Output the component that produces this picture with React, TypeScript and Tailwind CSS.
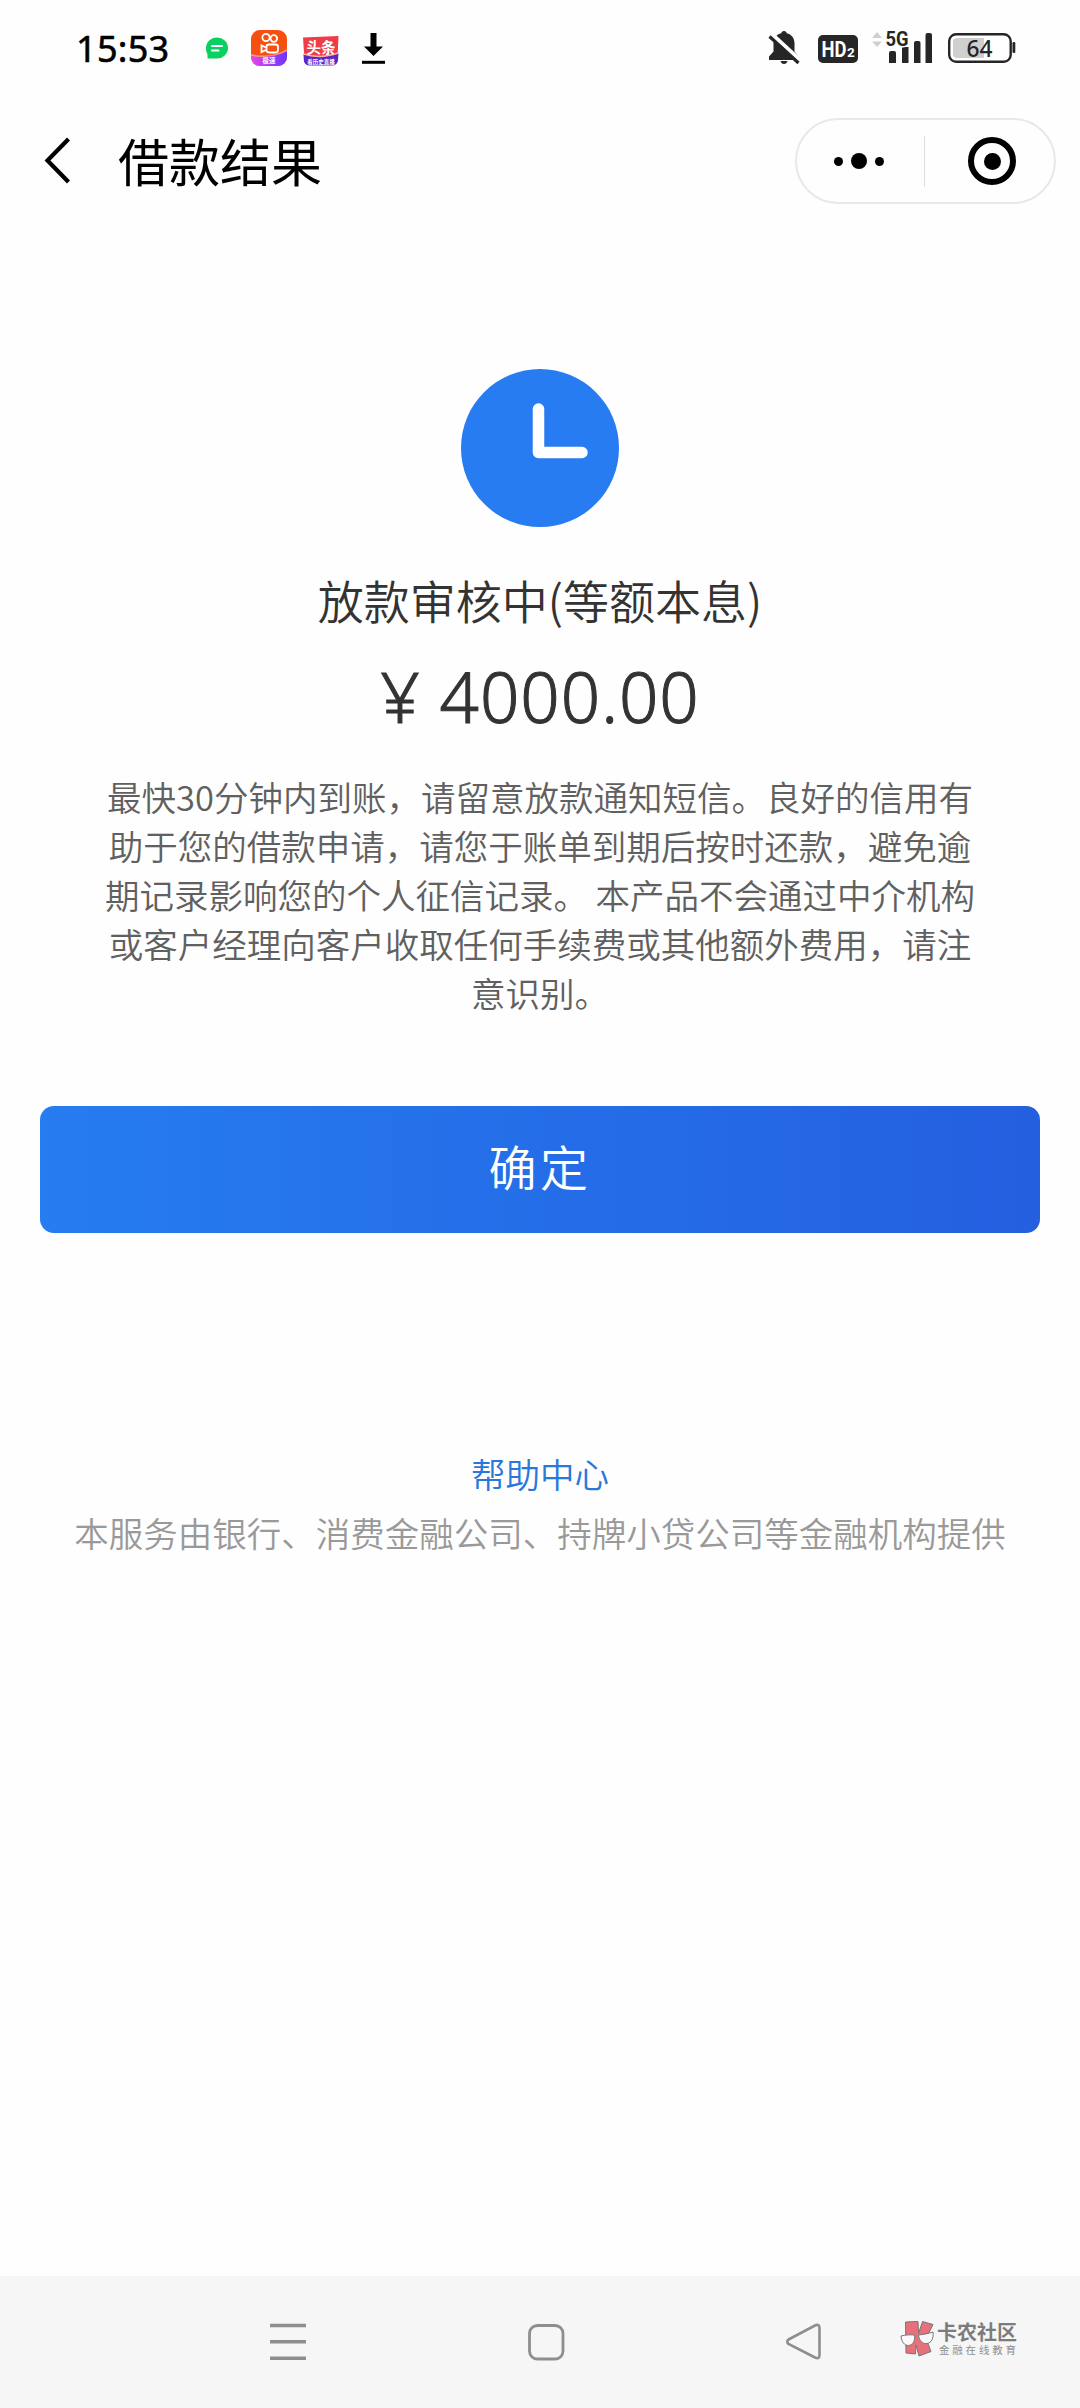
const notice = [
  '最快30分钟内到账，请留意放款通知短信。良好的信用有',
  '助于您的借款申请，请您于账单到期后按时还款，避免逾',
  '期记录影响您的个人征信记录。 本产品不会通过中介机构',
  '或客户经理向客户收取任何手续费或其他额外费用，请注',
  '意识别。',
];

const StatusBar = () => (
  <div className="h-24 shrink-0 flex items-center justify-between pl-[76px] pr-[64px] text-black">
    <div className="flex items-center">
      <span className="w-[102px] pt-0.5 text-[36px] leading-[48px] font-[450] tracking-[0.3px] whitespace-nowrap [-webkit-text-stroke:0.6px_#000] font-['Noto_Sans','Noto_Sans_CJK_SC',sans-serif]">
        15:53
      </span>
      {/* message */}
      <svg className="ml-[27px]" width="24" height="40" viewBox="205 28 24 40">
        <path d="M206 48a11 10.500 0 1 1 11 10.500h-9.500v-4A10 10 0 0 1 206 48z" fill="#07d160" />
        <path d="M212 46h10M212 50.500h6.500" stroke="#fff" strokeWidth="2" strokeLinecap="round" />
      </svg>
      {/* short video app */}
      <svg className="ml-[22px]" width="36" height="40" viewBox="251 28 36 40">
        <defs>
          <linearGradient id="purple" x1="0" x2="1" y1="0" y2="0">
            <stop offset="0" stopColor="#e645e8" />
            <stop offset="1" stopColor="#6a35ff" />
          </linearGradient>
          <clipPath id="tile"><rect x="251" y="30" width="36" height="36" rx="9" /></clipPath>
        </defs>
        <g clipPath="url(#tile)">
          <rect x="251" y="30" width="36" height="36" fill="#f4500f" />
          <path d="M251 54c12 3 25 2 36-5v17h-36z" fill="#ff9a7a" />
          <path d="M251 56c12 2 25 1 36-5v15h-36z" fill="url(#purple)" />
        </g>
        <g fill="none" stroke="#fff" strokeWidth="1.800">
          <circle cx="266" cy="37.500" r="3.600" />
          <circle cx="273.800" cy="38.500" r="3.300" />
          <rect x="266.500" y="44.500" width="11.500" height="8" rx="2.400" />
          <path d="M266 47.500l-4.500-2v6.500l4.500-2" />
        </g>
        <text x="269" y="63" textAnchor="middle" fontSize="6.500" fontWeight="700" fill="#fff" fontFamily="Noto Sans CJK SC, sans-serif">极速</text>
      </svg>
      {/* news app */}
      <svg className="ml-[16px]" width="36" height="40" viewBox="303 28 36 40">
        <path d="M303 37.500l35.500-1.500-1 22-3 6h-26l-4-4z" fill="#ef3c48" />
        <path d="M303.500 54c12 4 23 3 35-1l-.5 7c-.5 4-3 5.500-6 5.500h-21c-5 0-7-2-7.200-6z" fill="#5b25c9" />
        <path d="M303.500 54c12 4 23 3 35-1" stroke="#ffb3a0" strokeWidth="1.500" fill="none" />
        <text x="321" y="53" textAnchor="middle" fontSize="14.500" fontWeight="700" fill="#fff" fontFamily="Noto Sans CJK SC, sans-serif">头条</text>
        <text x="321" y="63.500" textAnchor="middle" fontSize="5.500" fontWeight="700" fill="#fff" fontFamily="Noto Sans CJK SC, sans-serif">看历史直播</text>
      </svg>
      {/* download */}
      <svg className="ml-[22px]" width="25" height="40" viewBox="361 28 25 40">
        <path d="M370.500 33h6v13.500h6.500l-9.500 9.500-9.500-9.500h6.500z" />
        <path d="M362 60.800h23v3h-23z" />
      </svg>
    </div>

    <svg width="250" height="48" viewBox="766 24 250 48" fill="#262626">
      {/* muted bell */}
      <path d="M784 31c1.700 0 2.500 1 2.700 2.300 5 1.200 7.800 5 7.800 10.200v8l4 5v3.500h-29.500v-3.500l4.500-5v-8c0-5.200 2.800-9 7.800-10.200.2-1.300 1-2.300 2.700-2.300zM780.500 61h7c-.5 2-1.700 3-3.500 3s-3-1-3.500-3z" />
      <path d="M769 31.500l32 29.500" stroke="#fff" strokeWidth="4" />
      <path d="M769.500 36.500l29 26.500" stroke="#262626" strokeWidth="3.200" />
      {/* HD2 */}
      <rect x="818" y="35" width="40" height="28" rx="5" />
      <text x="821.500" y="57" fontSize="22" fontWeight="700" fill="#fff" fontFamily="Roboto, sans-serif" textLength="25" lengthAdjust="spacingAndGlyphs">HD</text>
      <text x="847" y="57" fontSize="13.500" fontWeight="700" fill="#fff" fontFamily="Roboto, sans-serif">2</text>
      {/* signal */}
      <path d="M872 38l5-6 5 6zM872 41.500h10l-5 5.500z" fill="#cfcfcf" />
      <path d="M889 53a2 2 0 0 1 2-2h3a2 2 0 0 1 2 2v10h-7zM902 47h6.500v16h-6.500zM914 43a2 2 0 0 1 2-2h2.500a2 2 0 0 1 2 2v20h-6.500zM925.500 35a2 2 0 0 1 2-2h2.500a2 2 0 0 1 2 2v28h-6.500z" />
      <text x="885.500" y="46" fontSize="20.500" fontWeight="700" fontFamily="Roboto, sans-serif" textLength="23" lengthAdjust="spacingAndGlyphs" stroke="#fff" strokeWidth="3" paintOrder="stroke">5G</text>
      {/* battery */}
      <rect x="949.200" y="34.200" width="61.500" height="27.600" rx="7" fill="#fff" stroke="#262626" strokeWidth="2.400" />
      <path d="M957 38h27v20h-27a4 4 0 0 1-4-4v-12a4 4 0 0 1 4-4z" fill="#cfcfcf" />
      <rect x="1012.500" y="42" width="2.800" height="11" rx="1.200" />
      <text x="979.500" y="57" textAnchor="middle" fontSize="24" fontWeight="500" fontFamily="Noto Sans, sans-serif" textLength="26" lengthAdjust="spacingAndGlyphs">64</text>
    </svg>
  </div>
);

const Header = () => (
  <header className="h-[130px] shrink-0 flex items-center pl-[44px] pr-[24px]">
    <svg width="28" height="50" viewBox="44 136 28 50" fill="none" stroke="#000" strokeWidth="4.200">
      <path d="M68.500 139L47.500 160.500l21 21.500" />
    </svg>
    <h1 className="ml-[46px] pb-0.5 text-[51px] leading-[60px] font-normal text-black">借款结果</h1>
    <div className="ml-auto flex items-center w-[261px] h-[86px] rounded-full border-2 border-[#e8e8e8]">
      <div className="flex-1 flex items-center justify-center gap-[8px] pr-[3px]">
        <span className="w-[9px] h-[9px] rounded-full bg-black" />
        <span className="w-4 h-4 rounded-full bg-black" />
        <span className="w-[9px] h-[9px] rounded-full bg-black" />
      </div>
      <div className="w-px h-[51px] bg-[#dedede]" />
      <div className="flex-1 flex items-center justify-center pl-[6px]">
        <span className="flex items-center justify-center w-12 h-12 rounded-full border-6 border-black">
          <span className="w-[17px] h-[17px] rounded-full bg-black" />
        </span>
      </div>
    </div>
  </header>
);

const Watermark = () => (
  <div className="flex items-center">
    <svg width="34" height="38" viewBox="900 2320 34 38">
      <path
        d="M905.500 2322l12.500-.5.500 12 4-12 10.500 3-7 14 5 13-12 4.500-3-11-.5 9-9.500-1z"
        fill="#e8707a"
        stroke="#777"
        strokeWidth="1"
      />
      <g fill="#fafafa" stroke="#777" strokeWidth="1">
        <path d="M901 2336c4-1 9-1.500 13.500-1 .8 6-1.500 10-6 10.500-4 0-7-3.500-7.500-9.500z" />
        <path d="M918.500 2335c5-.5 10-1.500 14.500-3 .8 6-1.500 11-6 11.500-4.500.5-8-3-8.500-8.500z" />
      </g>
    </svg>
    <div className="ml-[3px] flex flex-col">
      <span className="text-[20px] leading-[21px] font-bold text-[#7c7c7c] whitespace-nowrap">卡农社区</span>
      <span className="ml-[2px] text-[10.500px] leading-[15px] tracking-[2.800px] text-[#8f8f8f] whitespace-nowrap">金融在线教育</span>
    </div>
  </div>
);

const NavBar = () => (
  <nav className="mt-auto h-[132px] shrink-0 bg-[#f6f6f6] flex items-center pl-[269px]">
    <svg width="38" height="40" viewBox="0 0 38 40" stroke="#8e8e8e" strokeWidth="3.400">
      <path d="M1 3.500h36M1 19.800h36M1 36.200h36" />
    </svg>
    <svg className="ml-[220px]" width="38" height="40" viewBox="527 2322 38 40" fill="none" stroke="#8e8e8e" strokeWidth="2.800">
      <rect x="529.500" y="2325.500" width="33.500" height="33.500" rx="8" />
    </svg>
    <svg className="ml-[220px]" width="38" height="40" viewBox="785 2322 38 40" fill="none" stroke="#8e8e8e" strokeWidth="2.600">
      <path d="M788.500 2339.500L815 2325.500q4.500-2 4.500 2.500v27q0 4.500-4.500 2.500L788.500 2344q-2.500-2.300 0-4.500z" />
    </svg>
    <div className="ml-[77px] pb-[7px]">
      <Watermark />
    </div>
  </nav>
);

export default function App() {
  return (
    <div className="w-[1080px] h-[2408px] overflow-hidden flex flex-col bg-[#fefefe] font-['Noto_Sans_CJK_SC',sans-serif]">
      <StatusBar />
      <Header />

      <main className="flex flex-col items-center px-10">
        <svg className="mt-[143px]" width="158" height="158" viewBox="0 0 158 158">
          <circle cx="79" cy="79" r="79" fill="#267cf0" />
          <path d="M77.500 40v43.500H121" fill="none" stroke="#fff" strokeWidth="11.500" strokeLinecap="round" strokeLinejoin="round" />
        </svg>
        <h2 className="mt-[42px] text-[46px] leading-[60px] font-[350] text-[#333] whitespace-nowrap">放款审核中(等额本息)</h2>
        <p className="mt-[27px] text-[69px] leading-[80px] font-[350] tracking-[1px] text-[#333] whitespace-nowrap [-webkit-text-stroke:1px_#333] font-['Noto_Sans','Noto_Sans_CJK_SC',sans-serif]">
          ¥ 4000.00
        </p>
        <div className="mt-[36px] text-center text-[34.500px] leading-[49px] font-[350] text-[#606060] whitespace-nowrap">
          {notice.map((line) => (
            <p key={line}>{line}</p>
          ))}
        </div>
        <button className="mt-[89px] w-[1000px] h-[127px] pb-2.5 rounded-[14px] bg-linear-to-r from-[#267cf0] to-[#245fe0] text-white text-[48px] font-[350] tracking-[3.500px]">
          确定
        </button>
        <a className="mt-[216px] text-[34.500px] leading-[48px] font-[350] text-[#2878dc]">帮助中心</a>
        <p className="mt-[11px] text-[34.500px] leading-[48px] font-[350] text-[#999] whitespace-nowrap">
          本服务由银行、消费金融公司、持牌小贷公司等金融机构提供
        </p>
      </main>

      <NavBar />
    </div>
  );
}
